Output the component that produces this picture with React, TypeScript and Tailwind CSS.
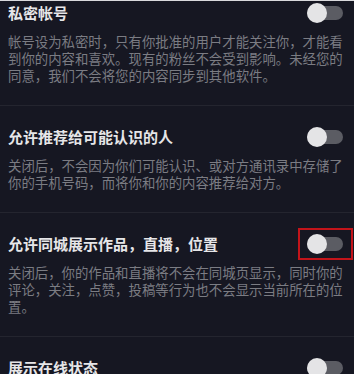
import React from "react";

const sections = [
  {
    title: "私密帐号",
    lines: [
      "帐号设为私密时，只有你批准的用户才能关注你，才能看",
      "到你的内容和喜欢。现有的粉丝不会受到影响。未经您的",
      "同意，我们不会将您的内容同步到其他软件。",
    ],
  },
  {
    title: "允许推荐给可能认识的人",
    lines: [
      "关闭后，不会因为你们可能认识、或对方通讯录中存储了",
      "你的手机号码，而将你和你的内容推荐给对方。",
    ],
  },
  {
    title: "允许同城展示作品，直播，位置",
    lines: [
      "关闭后，你的作品和直播将不会在同城页显示，同时你的",
      "评论，关注，点赞，投稿等行为也不会显示当前所在的位",
      "置。",
    ],
    highlight: true,
  },
  {
    title: "展示在线状态",
    lines: [] as string[],
  },
];

function Toggle({ highlight }: { highlight?: boolean }) {
  return (
    <div className="relative w-[36px] h-[20px] flex items-center">
      <div className="absolute left-0 right-0 top-[3px] h-[14px] rounded-full bg-[#5b5c63]" />
      <div className="absolute left-0 top-0 w-[20px] h-[20px] rounded-full bg-[#e4e4e6]" />
      {highlight && (
        <div className="absolute left-[-9px] top-[-6px] w-[55px] h-[32px] border-2 border-[#c3141a]" />
      )}
    </div>
  );
}

export default function App() {
  return (
    <div
      className="w-[354px] h-[374px] overflow-hidden bg-[#161722]"
      style={{ fontFamily: '"Noto Sans CJK SC", "Noto Sans", sans-serif' }}
    >
      <div className="h-px bg-[#d9d9dc]" />
      {sections.map((s, i) => (
        <div
          key={i}
          className={`pl-[8px] pr-[8px] ${i === 0 ? "pt-0 mt-[-1px]" : "pt-[18px]"} ${
            i < 3 ? "pb-[21px] border-b border-[#24252f]" : ""
          }`}
        >
          <div className="h-[26px] flex items-center justify-between">
            <span className="text-[15px] leading-[26px] font-semibold text-[#e6e6e8]">{s.title}</span>
            <div className="mr-[3px]">
              <Toggle highlight={s.highlight} />
            </div>
          </div>
          {s.lines.length > 0 && (
            <div className="mt-[7px] text-[13.4px] leading-[17px] text-[#7b7c83]">
              {s.lines.map((l, j) => (
                <div key={j} className="whitespace-nowrap">
                  {l}
                </div>
              ))}
            </div>
          )}
        </div>
      ))}
    </div>
  );
}
